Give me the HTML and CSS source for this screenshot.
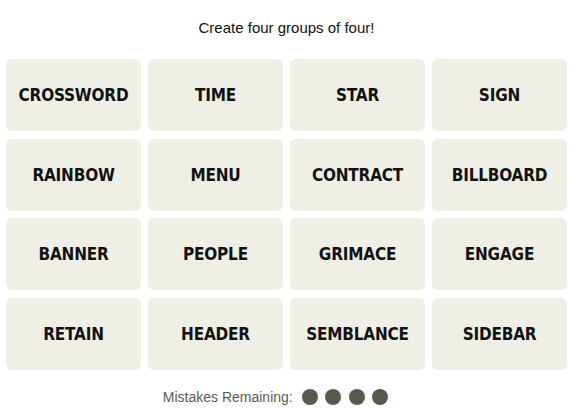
FILE: index.html
```html
<!DOCTYPE html>
<html lang="en">
<head>
    <meta charset="UTF-8">
    <meta name="viewport" content="width=device-width, initial-scale=1.0">
    <title>Connections</title>
    <link rel="stylesheet" href="styles.css">
</head>
<body>
    <div class="game">
        <p class="prompt">Create four groups of four!</p>
        <div class="board">
            <button class="tile">CROSSWORD</button>
            <button class="tile">TIME</button>
            <button class="tile">STAR</button>
            <button class="tile">SIGN</button>
            <button class="tile">RAINBOW</button>
            <button class="tile">MENU</button>
            <button class="tile">CONTRACT</button>
            <button class="tile">BILLBOARD</button>
            <button class="tile">BANNER</button>
            <button class="tile">PEOPLE</button>
            <button class="tile">GRIMACE</button>
            <button class="tile">ENGAGE</button>
            <button class="tile">RETAIN</button>
            <button class="tile">HEADER</button>
            <button class="tile">SEMBLANCE</button>
            <button class="tile">SIDEBAR</button>
        </div>
        <div class="mistakes">
            <span>Mistakes Remaining:</span>
            <span class="dots">
                <span class="dot"></span>
                <span class="dot"></span>
                <span class="dot"></span>
                <span class="dot"></span>
            </span>
        </div>
    </div>
</body>
</html>
```

FILE: styles.css
```css
body {
    margin: 0;
    font-family: 'Liberation Sans', Arial, sans-serif;
    background: #fff;
    color: #000;
}
.game {
    padding: 0 4px 0 6px;
}
.prompt {
    margin: 0;
    padding-top: 19px;
    height: 40px;
    box-sizing: border-box;
    text-align: center;
    font-size: 15px;
    line-height: 18px;
    color: #121212;
}
.board {
    display: grid;
    grid-template-columns: repeat(4, 135px);
    grid-auto-rows: 72px;
    column-gap: 7px;
    row-gap: 7.5px;
    margin-top: 19px;
}
.tile {
    border: none;
    border-radius: 6px;
    background: #efefe6;
    font-family: 'DejaVu Sans Condensed', 'DejaVu Sans', sans-serif;
    font-stretch: condensed;
    font-weight: bold;
    font-size: 17px;
    letter-spacing: -0.2px;
    color: #121212;
    padding: 0;
    cursor: pointer;
}
.mistakes {
    display: flex;
    justify-content: center;
    align-items: center;
    gap: 9px;
    margin-top: 19px;
    padding-right: 22px;
    font-size: 14px;
    color: #5a5a5a;
}
.dots {
    display: flex;
    gap: 7.5px;
}
.dot {
    width: 16px;
    height: 16px;
    border-radius: 50%;
    background: #5a594e;
}
```
